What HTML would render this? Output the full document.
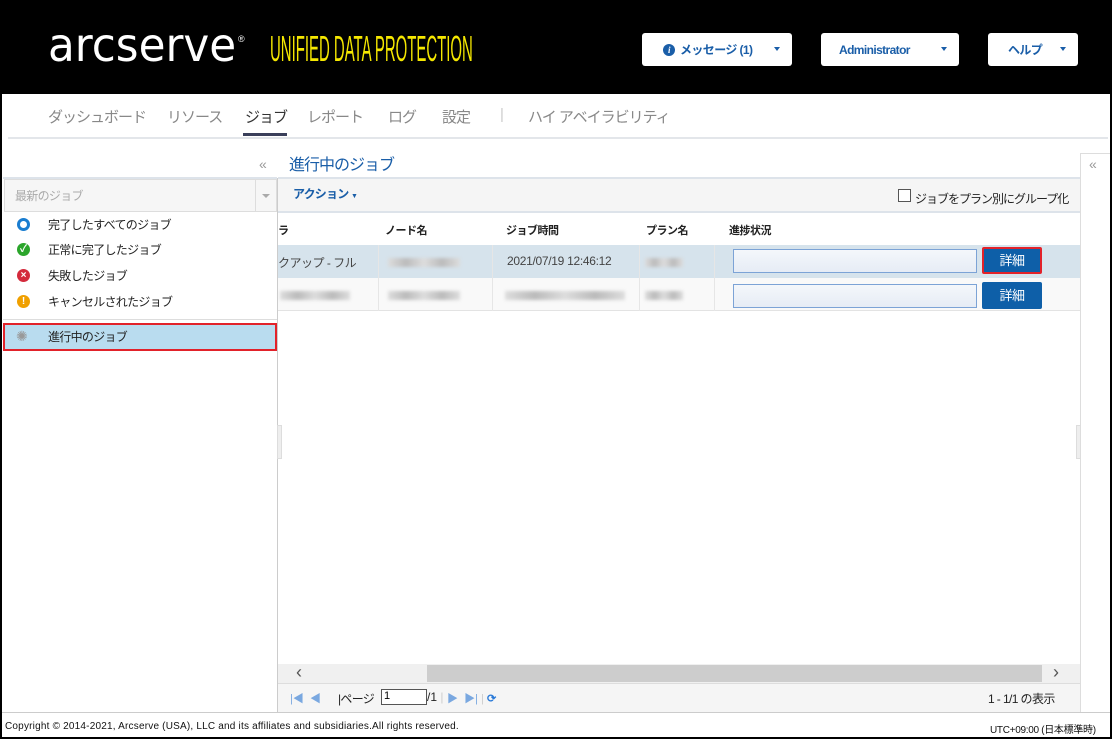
<!DOCTYPE html>
<html><head><meta charset="utf-8"><style>
*{box-sizing:border-box;margin:0;padding:0}
body{width:1112px;height:739px;overflow:hidden;background:#fff;font-family:"Liberation Sans","Noto Sans CJK JP",sans-serif;position:relative}
.frame{position:absolute;left:0;top:0;width:1112px;height:739px;border:2px solid #000}
.a{position:absolute;white-space:nowrap}
.hdr{left:2px;top:2px;width:1108px;height:92px;background:#000}
.btn{position:absolute;top:33px;height:33px;background:#fff;border-radius:3px;color:#1a5ea8;font-size:12px;font-weight:bold;display:flex;align-items:center;letter-spacing:-0.6px}
.caret{position:absolute;right:12px;top:14px;width:0;height:0;border-left:3px solid transparent;border-right:3px solid transparent;border-top:4px solid #1a5ea8}
.nav{font-size:15px;color:#888;top:106px;letter-spacing:-1px}
.menu{font-size:12px;color:#222;left:48px;letter-spacing:-0.7px}
.ico{position:absolute;left:17px;width:13px;height:13px;border-radius:50%;color:#fff;font-size:10px;font-weight:bold;text-align:center;line-height:13px}
.th{top:222px;font-size:11px;font-weight:bold;color:#222;letter-spacing:-0.5px}
.blur{position:absolute;height:9px;background:linear-gradient(90deg,#ddd,#bbb,#ddd,#bbb,#ddd);filter:blur(1.5px)}
.pb{position:absolute;left:733px;width:244px;height:24px;border:1px solid #7ca3d6;background:linear-gradient(#f4f7fb,#e6ecf5)}
.det{position:absolute;left:982px;width:60px;height:27px;background:#0e5fa8;color:#fff;font-size:13px;text-align:center;line-height:27px;border-radius:2px}
</style></head><body>
<div class="a hdr"></div>
<div class="a" style="left:48px;top:20px;color:#fff;font-size:46px;font-family:'DejaVu Sans',sans-serif;line-height:50px;transform:scaleX(0.95);transform-origin:left">arcserve</div>
<div class="a" style="left:238px;top:34px;color:#fff;font-size:9px">®</div>
<div class="a" style="left:270px;top:30px;color:#f5e700;font-size:36px;transform:scaleX(0.415);transform-origin:left;line-height:38px">UNIFIED DATA PROTECTION</div>
<div class="btn" style="left:642px;width:150px"><span style="margin-left:21px;width:12px;height:12px;border-radius:50%;background:#1a5ea8;color:#fff;font-size:9px;text-align:center;line-height:12px;font-style:italic;font-family:'Liberation Serif',serif">i</span><span style="margin-left:5px">メッセージ (1)</span><div class="caret"></div></div>
<div class="btn" style="left:821px;width:138px"><span style="margin-left:18px">Administrator</span><div class="caret"></div></div>
<div class="btn" style="left:988px;width:90px"><span style="margin-left:20px">ヘルプ</span><div class="caret"></div></div>

<div class="a nav" style="left:48px">ダッシュボード</div>
<div class="a nav" style="left:167px">リソース</div>
<div class="a nav" style="left:245px;color:#333">ジョブ</div>
<div class="a" style="left:243px;top:133px;width:44px;height:3px;background:#3a3f5a"></div>
<div class="a nav" style="left:307px">レポート</div>
<div class="a nav" style="left:388px">ログ</div>
<div class="a nav" style="left:442px">設定</div>
<div class="a nav" style="left:500px;color:#ccc">|</div>
<div class="a nav" style="left:528px">ハイ アベイラビリティ</div>
<div class="a" style="left:8px;top:137px;width:1100px;height:2px;background:#e3e6ea"></div>

<div class="a" style="left:259px;top:156px;color:#999;font-size:14px">«</div>
<div class="a" style="left:3px;top:177px;width:274px;height:2px;background:#dde3ea"></div>
<div class="a" style="left:4px;top:179px;width:273px;height:33px;border:1px solid #ddd;background:#f6f6f6"></div>
<div class="a" style="left:15px;top:187px;font-size:12px;color:#aaa;letter-spacing:-0.7px">最新のジョブ</div>
<div class="a" style="left:255px;top:180px;width:1px;height:31px;background:#ddd"></div>
<div class="a" style="left:262px;top:194px;border-left:4px solid transparent;border-right:4px solid transparent;border-top:4px solid #aaa"></div>
<div class="a" style="left:277px;top:178px;width:1px;height:535px;background:#ccc"></div>
<div class="ico" style="top:218px;background:#fff;border:3px solid #1a7dd0"></div><div class="a menu" style="top:216px">完了したすべてのジョブ</div>
<div class="ico" style="top:243px;background:#2ba52b">✓</div><div class="a menu" style="top:241px">正常に完了したジョブ</div>
<div class="ico" style="top:269px;background:#d42a3c">×</div><div class="a menu" style="top:267px">失敗したジョブ</div>
<div class="ico" style="top:295px;background:#f0a000">!</div><div class="a menu" style="top:293px">キャンセルされたジョブ</div>
<div class="a" style="left:3px;top:319px;width:274px;height:1px;background:#ddd"></div>
<div class="a" style="left:3px;top:323px;width:274px;height:28px;background:#b9dcef;border:2px solid #e2222a"></div>
<div class="a" style="left:16px;top:328px;font-size:14px;color:#999">✺</div>
<div class="a menu" style="top:328px">進行中のジョブ</div>

<div class="a" style="left:289px;top:151px;font-size:16px;color:#1a5ea8;letter-spacing:-1px">進行中のジョブ</div>
<div class="a" style="left:278px;top:177px;width:802px;height:36px;background:#f5f5f5;border-top:2px solid #dde3ea;border-bottom:2px solid #dde3ea"></div>
<div class="a" style="left:293px;top:185px;font-size:12px;color:#1a5ea8;font-weight:bold;letter-spacing:-0.8px">アクション <span style="font-size:7px">▼</span></div>
<div class="a" style="left:898px;top:189px;width:13px;height:13px;border:1px solid #555;background:#fff"></div>
<div class="a" style="left:915px;top:190px;font-size:12px;color:#222;letter-spacing:-1px">ジョブをプラン別にグループ化</div>
<div class="a th" style="left:278px">ラ</div>
<div class="a th" style="left:385px">ノード名</div>
<div class="a th" style="left:506px">ジョブ時間</div>
<div class="a th" style="left:646px">プラン名</div>
<div class="a th" style="left:729px">進捗状況</div>
<div class="a" style="left:278px;top:245px;width:802px;height:33px;background:#d6e3ec"></div>
<div class="a" style="left:278px;top:278px;width:802px;height:33px;background:#f9f9f9;border-bottom:1px solid #e3e3e3"></div>
<div class="a" style="left:378px;top:245px;width:1px;height:66px;background:#e6e6e6"></div>
<div class="a" style="left:492px;top:245px;width:1px;height:66px;background:#e6e6e6"></div>
<div class="a" style="left:639px;top:245px;width:1px;height:66px;background:#e6e6e6"></div>
<div class="a" style="left:714px;top:245px;width:1px;height:66px;background:#e6e6e6"></div>
<div class="a" style="left:278px;top:254px;font-size:12px;color:#444;letter-spacing:-0.5px">クアップ - フル</div>
<div class="blur" style="left:388px;top:258px;width:72px"></div>
<div class="a" style="left:507px;top:254px;font-size:12px;color:#444;letter-spacing:-0.3px">2021/07/19 12:46:12</div>
<div class="blur" style="left:645px;top:258px;width:38px"></div>
<div class="blur" style="left:280px;top:291px;width:70px"></div>
<div class="blur" style="left:388px;top:291px;width:72px"></div>
<div class="blur" style="left:505px;top:291px;width:120px"></div>
<div class="blur" style="left:645px;top:291px;width:38px"></div>
<div class="pb" style="top:249px"></div>
<div class="pb" style="top:284px"></div>
<div class="det" style="top:247px;border:2px solid #e2222a;line-height:23px;letter-spacing:-0.5px">詳細</div>
<div class="det" style="top:282px;letter-spacing:-0.5px">詳細</div>

<div class="a" style="left:277px;top:425px;width:5px;height:34px;background:#eee;border:1px solid #ddd"></div>
<div class="a" style="left:278px;top:664px;width:802px;height:19px;background:#f0f0f0"></div>
<div class="a" style="left:427px;top:665px;width:615px;height:17px;background:#cdcdcd"></div>
<div class="a" style="left:296px;top:662px;font-size:18px;color:#555;line-height:20px">‹</div>
<div class="a" style="left:1053px;top:662px;font-size:18px;color:#555;line-height:20px">›</div>
<div class="a" style="left:278px;top:683px;width:802px;height:30px;background:#f5f5f5;border-top:1px solid #ddd"></div>
<div class="a" style="left:290px;top:690px;font-size:11px;color:#7aa8e0">|◀ &nbsp;◀</div>
<div class="a" style="left:338px;top:690px;font-size:12px;color:#222;letter-spacing:-0.7px">|ページ</div>
<div class="a" style="left:381px;top:689px;width:46px;height:16px;border:1px solid #555;background:#fff;font-size:11px;padding-left:2px">1</div>
<div class="a" style="left:427px;top:690px;font-size:12px;color:#222">/1 <span style="color:#ccc">|</span></div>
<div class="a" style="left:447px;top:690px;font-size:11px;color:#7aa8e0">▶ &nbsp;▶| <span style="color:#ccc">|</span> <span style="color:#2a7ad8;font-weight:bold">⟳</span></div>
<div class="a" style="left:988px;top:690px;font-size:12px;color:#222;letter-spacing:-0.6px">1 - 1/1 の表示</div>

<div class="a" style="left:1080px;top:153px;width:30px;height:560px;border-left:1px solid #ddd;border-top:1px solid #ddd"></div>
<div class="a" style="left:1089px;top:156px;font-size:14px;color:#999">«</div>
<div class="a" style="left:1076px;top:425px;width:5px;height:34px;background:#eee;border:1px solid #ddd"></div>

<div class="a" style="left:2px;top:712px;width:1108px;height:1px;background:#ccc"></div>
<div class="a" style="left:5px;top:721px;font-size:10px;color:#111;letter-spacing:0.2px">Copyright © 2014-2021, Arcserve (USA), LLC and its affiliates and subsidiaries.All rights reserved.</div>
<div class="a" style="left:990px;top:721px;font-size:10px;color:#111;letter-spacing:-0.3px">UTC+09:00 (日本標準時)</div>
<div class="frame"></div>
</body></html>
